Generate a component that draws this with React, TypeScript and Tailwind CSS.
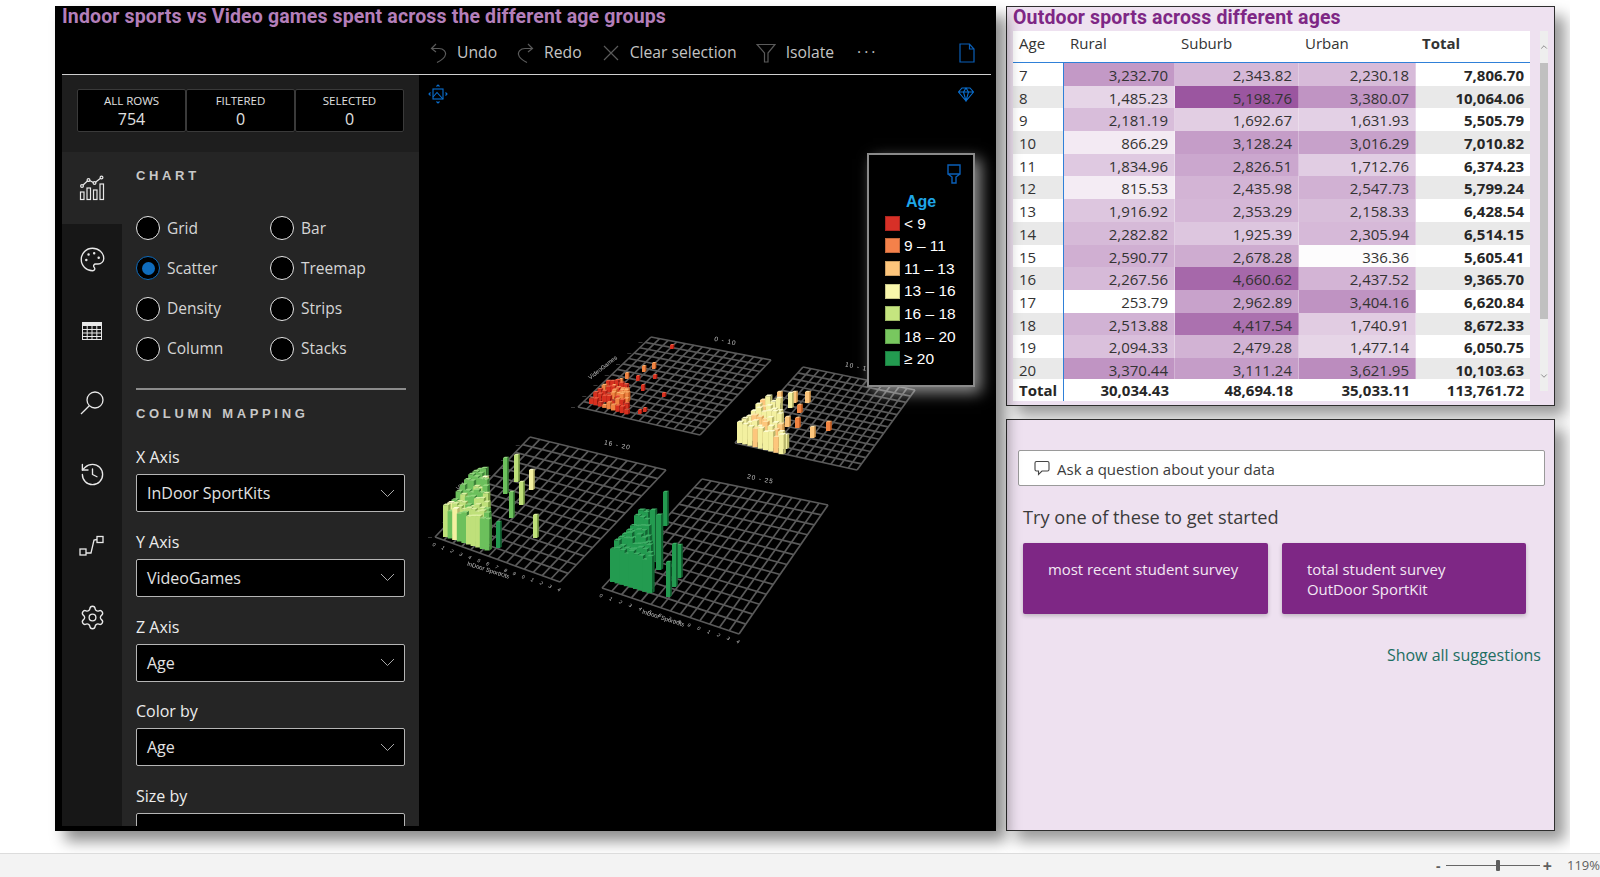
import React from "react";
import { ChevronDown, ChevronUp, History, Palette, Settings } from "lucide-react";

type Pt = [number, number];
type Plate = {
  corners: [Pt, Pt, Pt, Pt];
  title: string;
  titleAt: Pt;
  yLabel?: Pt;
  xLabel?: Pt;
};

const PALETTE: Record<string, [string, string, string]> = {
  red: ["#d7301f", "#ef6548", "#a81c10"],
  orange: ["#f08442", "#fbb36e", "#c45f24"],
  peach: ["#fdc67c", "#fee2a8", "#d59a50"],
  yellow: ["#f3f0a0", "#fdfcd0", "#b9b66c"],
  lime: ["#bfe07a", "#dcf0a2", "#7fa24a"],
  green: ["#6cc05c", "#93d67e", "#3d8238"],
  dark: ["#239b50", "#3fae66", "#126332"],
};

// near-left, back-left, back-right, near-right
const PLATES: Plate[] = [
  { corners: [[578, 407], [651, 337], [771, 360], [700, 435]], title: "0 - 10", titleAt: [725, 343], yLabel: [604, 369] },
  { corners: [[735, 443], [803, 367], [915, 390], [857, 470]], title: "10 - 15", titleAt: [858, 369] },
  { corners: [[435, 537], [530, 437], [666, 470], [560, 582]], title: "16 - 20", titleAt: [617, 447], yLabel: [472, 480], xLabel: [488, 571] },
  { corners: [[602, 588], [702, 479], [828, 505], [739, 634]], title: "20 - 25", titleAt: [760, 481], xLabel: [663, 619] },
];

const lerp = (a: Pt, b: Pt, t: number): Pt => [a[0] + (b[0] - a[0]) * t, a[1] + (b[1] - a[1]) * t];

function rng(seed: number) {
  let s = seed;
  return () => {
    s = (s * 16807) % 2147483647;
    return s / 2147483647;
  };
}

type Bar = { x: number; y: number; h: number; c: string; w: number };

function cluster(seed: number, start: Pt, colV: Pt, rowV: Pt, cols: number, rows: number, minH: number, maxH: number, w: number, colors: string[]) {
  const r = rng(seed);
  const out: Bar[] = [];
  for (let j = rows - 1; j >= 0; j--) {
    for (let i = 0; i < cols - j; i++) {
      const h = minH + (maxH - minH) * r() + j * 0.6;
      out.push({
        x: start[0] + colV[0] * i + rowV[0] * j,
        y: start[1] + colV[1] * i + rowV[1] * j,
        h,
        w,
        c: colors[Math.floor(r() * colors.length)],
      });
    }
  }
  return out;
}

const b = (x: number, yTop: number, yBottom: number, c: string, w = 4): Bar => ({ x, y: yBottom, h: yBottom - yTop, c, w });

const BARS: Bar[] = [
  // plate 1
  b(670, 345, 349, "red", 3), b(642, 366, 372, "orange", 3), b(652, 363, 369, "orange", 3), b(653, 375, 379, "red", 3),
  b(625, 373, 379, "orange", 3), b(636, 376, 381, "red", 3), b(619, 379, 385, "orange", 3), b(641, 385, 391, "red", 3),
  b(662, 393, 397, "red", 3), b(612, 385, 390, "orange", 3), b(620, 391, 395, "red", 3), b(638, 410, 414, "red", 3),
  b(643, 408, 412, "red", 3),
  ...cluster(11, [589, 404], [4.4, 1.3], [4.2, -4.4], 9, 5, 3, 7, 4, ["red", "red", "orange", "red"]),
  ...cluster(12, [612, 397], [4.2, 1.5], [3.6, -4], 4, 2, 5, 9, 4, ["orange", "orange", "red"]),
  // plate 2
  b(777, 392, 403, "peach"), b(788, 393, 408, "yellow"), b(792, 392, 403, "peach"), b(805, 392, 403, "peach"),
  b(797, 405, 413, "orange"), b(772, 413, 423, "peach"), b(785, 417, 427, "peach"), b(795, 418, 428, "orange"),
  b(810, 427, 438, "peach"), b(826, 422, 431, "orange"),
  ...cluster(21, [737, 443], [5.2, 1.4], [4.6, -5], 9, 6, 15, 21, 5, ["yellow", "yellow", "yellow", "peach"]),
  b(772, 438, 448, "orange", 5), b(782, 435, 449, "yellow", 5),
  // plate 3
  b(503, 458, 494, "green"), b(514, 455, 482, "lime"), b(529, 470, 490, "yellow"), b(519, 482, 505, "lime"),
  b(509, 492, 518, "green"), b(533, 515, 538, "lime"), b(496, 522, 548, "dark"),
  ...cluster(31, [443, 537], [4.6, 1.5], [4.2, -4.6], 10, 9, 26, 32, 5.2, ["green", "green", "green", "lime", "green", "lime", "green", "green", "lime", "yellow"]),
  // plate 4
  b(663, 492, 526, "dark"), b(666, 562, 597, "dark"), b(672, 544, 587, "dark"), b(677, 545, 578, "dark"),
  ...cluster(41, [610, 582], [4.6, 1.4], [4, -4.4], 9, 9, 31, 37, 5.4, ["dark"]),
  b(650, 510, 562, "dark", 5), b(656, 515, 570, "dark", 5),
].sort((p, q) => p.y - q.y);

function PlateGrid({ plate }: { plate: Plate }) {
  const [nl, bl, br, nr] = plate.corners;
  const cols = 14;
  const rows = 13;
  const lines: React.ReactNode[] = [];
  for (let i = 0; i <= cols; i++) {
    const p = lerp(nl, nr, i / cols);
    const q = lerp(bl, br, i / cols);
    lines.push(<line key={`c${i}`} x1={p[0]} y1={p[1]} x2={q[0]} y2={q[1]} />);
  }
  for (let j = 0; j <= rows; j++) {
    const p = lerp(nl, bl, j / rows);
    const q = lerp(nr, br, j / rows);
    lines.push(<line key={`r${j}`} x1={p[0]} y1={p[1]} x2={q[0]} y2={q[1]} />);
  }
  const ticks: React.ReactNode[] = [];
  if (plate.xLabel) {
    for (let i = 0; i <= cols; i++) {
      const p = lerp(nl, nr, i / cols);
      ticks.push(
        <text key={`x${i}`} x={p[0] - 3} y={p[1] + 8} fontSize="5" transform={`rotate(40 ${p[0] - 3} ${p[1] + 8})`}>
          {i % 10}
        </text>
      );
    }
  }
  if (plate.yLabel) {
    for (let j = 0; j <= rows; j += 2) {
      const p = lerp(nl, bl, j / rows);
      ticks.push(
        <text key={`y${j}`} x={p[0] - 7} y={p[1] + 1} fontSize="4">
          —
        </text>
      );
    }
  }
  return (
    <g>
      <g stroke="#5a5a5a" strokeWidth="1.7">{lines}</g>
      <g fill="#c4c4c4" fontFamily="Liberation Sans, sans-serif">
        {ticks}
        <text x={plate.titleAt[0]} y={plate.titleAt[1]} fontSize="6.5" letterSpacing="1" textAnchor="middle" transform={`rotate(12 ${plate.titleAt[0]} ${plate.titleAt[1]})`}>
          {plate.title}
        </text>
        {plate.xLabel && (
          <text x={plate.xLabel[0]} y={plate.xLabel[1] + 1} fontSize="6" textAnchor="middle" transform={`rotate(18 ${plate.xLabel[0]} ${plate.xLabel[1]})`}>
            InDoor SportKits
          </text>
        )}
        {plate.yLabel && (
          <text x={plate.yLabel[0]} y={plate.yLabel[1]} fontSize="6" textAnchor="middle" transform={`rotate(-38 ${plate.yLabel[0]} ${plate.yLabel[1]})`}>
            VideoGames
          </text>
        )}
      </g>
    </g>
  );
}

function Bars() {
  return (
    <g>
      {BARS.map((bar, i) => {
        const [base, light, dark] = PALETTE[bar.c];
        const { x, y, h, w } = bar;
        const top = y - h;
        const d = w * 0.45;
        return (
          <g key={i}>
            <rect x={x} y={top} width={w} height={h} fill={base} />
            <polygon points={`${x + w},${top} ${x + w + d},${top - d * 0.7} ${x + w + d},${y - d * 0.7} ${x + w},${y}`} fill={dark} />
            <polygon points={`${x},${top} ${x + d},${top - d * 0.7} ${x + w + d},${top - d * 0.7} ${x + w},${top}`} fill={light} />
          </g>
        );
      })}
    </g>
  );
}

function ScatterScene() {
  return (
    <svg className="absolute top-0 left-0 blur-[0.5px]" width="577" height="751" viewBox="419 75 577 751">
      {PLATES.map((p) => (
        <PlateGrid key={p.title} plate={p} />
      ))}
      <Bars />
    </svg>
  );
}

const Radio = ({ label, on }: { label: string; on?: boolean }) => (
  <div className="flex items-center gap-[7px]">
    <div className={`w-[24px] h-[24px] rounded-full bg-black border-[1.5px] flex items-center justify-center ${on ? "border-[#0f6cbd]" : "border-[#e6e6e6]"}`}>
      {on && <div className="w-[13px] h-[13px] rounded-full bg-[#0f6cbd]" />}
    </div>
    <span className="text-[15.5px] text-[#d6d6d6]">{label}</span>
  </div>
);

const Chevron = () => (
  <svg width="15" height="9" viewBox="0 0 15 9" fill="none" stroke="#a8a8a8" strokeWidth="1">
    <path d="M1 1 L7.5 7.5 L14 1" />
  </svg>
);

const Field = ({ label, value }: { label: string; value: string }) => (
  <div>
    <div className="h-[22px] leading-[22px] text-[16px] font-medium text-[#ececec]">{label}</div>
    <div className="mt-[6px] h-[38px] w-[269px] border-[1.5px] border-[#b5b5b5] rounded-[2px] bg-black flex items-center justify-between pl-[10px] pr-[9px]">
      <span className="text-[16px] text-[#e2e2e2]">{value}</span>
      {value && <Chevron />}
    </div>
  </div>
);

const ChartNavIcon = () => (
  <svg width="26" height="26" viewBox="0 0 26 26" fill="none" stroke="#e8e8e8" strokeWidth="1.2">
    <rect x="1.5" y="17" width="3.5" height="7.5" />
    <rect x="8" y="13" width="3.5" height="11.5" />
    <rect x="14.5" y="15" width="3.5" height="9.5" />
    <rect x="21" y="9" width="3.5" height="15.5" />
    <path d="M3 11 L9.5 5 L15.5 8 L22.5 2.5" />
    <circle cx="3" cy="11" r="1.4" fill="#252525" />
    <circle cx="9.5" cy="5" r="1.4" fill="#252525" />
    <circle cx="15.5" cy="8" r="1.4" fill="#252525" />
    <circle cx="22.5" cy="2.5" r="1.4" fill="#252525" />
  </svg>
);

const TableIcon = () => (
  <svg width="20" height="18" viewBox="0 0 20 18" fill="none" stroke="#e8e8e8" strokeWidth="1">
    <rect x="0.5" y="0.5" width="19" height="17" />
    <rect x="0.5" y="0.5" width="19" height="3" fill="#e8e8e8" />
    <path d="M0.5 7.5 H19.5 M0.5 11 H19.5 M0.5 14.5 H19.5 M5.2 3.5 V17.5 M10 3.5 V17.5 M14.8 3.5 V17.5" />
  </svg>
);

const SearchIcon = () => (
  <svg width="24" height="24" viewBox="0 0 24 24" fill="none" stroke="#e8e8e8" strokeWidth="1.3">
    <circle cx="15" cy="9" r="8" />
    <path d="M9.3 14.7 L1 23" />
  </svg>
);

const FlowIcon = () => (
  <svg width="26" height="22" viewBox="0 0 26 22" fill="none" stroke="#e8e8e8" strokeWidth="1.3">
    <rect x="1" y="14" width="6" height="6" />
    <rect x="18" y="1.5" width="6" height="6" />
    <path d="M7 18 L12 18 L15 5 L18 4.5" />
  </svg>
);

const UndoIcon = ({ flip }: { flip?: boolean }) => (
  <svg width="17" height="20" viewBox="0 0 17 20" fill="none" stroke="#5a5a5a" strokeWidth="1.2" className={flip ? "-scale-x-100" : ""}>
    <path d="M6 1 L1.5 5.5 L6 9" />
    <path d="M1.5 5.5 H9 C 14 5.5, 16 9, 15.5 11.5 C 15 14.5, 11 17.5, 7 19.5" />
  </svg>
);

const FunnelIcon = () => (
  <svg width="20" height="20" viewBox="0 0 20 20" fill="none" stroke="#5a5a5a" strokeWidth="1.2">
    <path d="M1 1.5 H19 L12 10 V19 H8.5 V10 Z" />
  </svg>
);

const CrossIcon = () => (
  <svg width="16" height="16" viewBox="0 0 16 16" stroke="#5a5a5a" strokeWidth="1.2">
    <path d="M1 1 L15 15 M15 1 L1 15" />
  </svg>
);

const DocIcon = () => (
  <svg width="16" height="20" viewBox="0 0 16 20" fill="none" stroke="#0a5fb8" strokeWidth="1.2">
    <path d="M1 1 H10.5 L15 6 V19 H1 Z M10.5 1 V6 H15" />
  </svg>
);

const MoveImageIcon = () => (
  <svg width="20" height="20" viewBox="0 0 20 20" fill="none" stroke="#0a6fd0" strokeWidth="1.1">
    <rect x="5" y="5" width="10" height="10" />
    <path d="M5 13 L9 8.5 L15 15" />
    <path d="M8.5 2.5 L10 1 L11.5 2.5 M8.5 17.5 L10 19 L11.5 17.5 M2.5 8.5 L1 10 L2.5 11.5 M17.5 8.5 L19 10 L17.5 11.5" />
  </svg>
);

const GemIcon = () => (
  <svg width="16" height="15" viewBox="0 0 16 15" fill="none" stroke="#0a6fd0" strokeWidth="1.1">
    <path d="M4 1 H12 L15.5 5 L8 14 L0.5 5 Z M0.5 5 H15.5 M5.5 5 L8 14 L10.5 5 M5.5 5 L8 1 L10.5 5" />
  </svg>
);

const BrushIcon = () => (
  <svg width="14" height="20" viewBox="0 0 14 20" fill="none" stroke="#0a5fb8" strokeWidth="1.4">
    <path d="M1 1 H13 V10 H1 Z M1 10 L5 13 V19 H9 V13 L13 10" />
  </svg>
);

const ChatIcon = () => (
  <svg width="16" height="16" viewBox="0 0 16 16" fill="none" stroke="#444" strokeWidth="1.1">
    <path d="M2.5 1.5 H13.5 Q15 1.5 15 3 V9.5 Q15 11 13.5 11 H8 L4.5 14.5 V11 H2.5 Q1 11 1 9.5 V3 Q1 1.5 2.5 1.5 Z" />
  </svg>
);

const NAV = [
  <ChartNavIcon key="a" />,
  <Palette key="b" size={27} strokeWidth={1.2} className="text-[#e8e8e8]" />,
  <TableIcon key="c" />,
  <SearchIcon key="d" />,
  <History key="e" size={27} strokeWidth={1.2} className="text-[#e8e8e8]" />,
  <FlowIcon key="f" />,
  <Settings key="g" size={27} strokeWidth={1.2} className="text-[#e8e8e8]" />,
];

const LEGEND: [string, string][] = [
  ["< 9", "bg-[#d73027]"],
  ["9 – 11", "bg-[#f4814a]"],
  ["11 – 13", "bg-[#fdc57b]"],
  ["13 – 16", "bg-[#f9f7ab]"],
  ["16 – 18", "bg-[#c5e57f]"],
  ["18 – 20", "bg-[#78c75f]"],
  ["≥ 20", "bg-[#239b50]"],
];

const ROWS: [string, number, number, number, string][] = [
  ["7", 3232.7, 2343.82, 2230.18, "7,806.70"],
  ["8", 1485.23, 5198.76, 3380.07, "10,064.06"],
  ["9", 2181.19, 1692.67, 1631.93, "5,505.79"],
  ["10", 866.29, 3128.24, 3016.29, "7,010.82"],
  ["11", 1834.96, 2826.51, 1712.76, "6,374.23"],
  ["12", 815.53, 2435.98, 2547.73, "5,799.24"],
  ["13", 1916.92, 2353.29, 2158.33, "6,428.54"],
  ["14", 2282.82, 1925.39, 2305.94, "6,514.15"],
  ["15", 2590.77, 2678.28, 336.36, "5,605.41"],
  ["16", 2267.56, 4660.62, 2437.52, "9,365.70"],
  ["17", 253.79, 2962.89, 3404.16, "6,620.84"],
  ["18", 2513.88, 4417.54, 1740.91, "8,672.33"],
  ["19", 2094.33, 2479.28, 1477.14, "6,050.75"],
  ["20", 3370.44, 3111.24, 3621.95, "10,103.63"],
];

const fmt = (v: number) => v.toLocaleString("en-US", { minimumFractionDigits: 2, maximumFractionDigits: 2 });

function heat(v: number) {
  const t = Math.max(0, (v - 253.79) / (5198.76 - 253.79));
  const mix = (from: number, to: number) => Math.round(from + (to - from) * t);
  return `rgb(${mix(255, 155)},${mix(255, 86)},${mix(255, 160)})`;
}

const GRID = "grid grid-cols-[51px_111px_124px_117px_115px]";

function Matrix() {
  return (
    <div className="flex pl-[6px]">
      <div className="w-[517px] bg-white text-[15px] text-[#333]">
        <div className={`${GRID} h-[32px] border-b border-[#2f80d8]`}>
          <div className="pl-[6px] pt-[1px]">Age</div>
          <div className="pl-[6px] pt-[1px]">Rural</div>
          <div className="pl-[6px] pt-[1px]">Suburb</div>
          <div className="pl-[6px] pt-[1px]">Urban</div>
          <div className="pl-[6px] pt-[1px] font-bold">Total</div>
        </div>
        <div className="h-[316px] overflow-hidden">
          {ROWS.map((r, i) => (
            <div key={r[0]} className={`${GRID} h-[22.7px] leading-[24px] ${i % 2 ? "bg-[#e9e9e9]" : "bg-white"}`}>
              <div className="pl-[6px] border-r border-[#2f80d8]">{r[0]}</div>
              {[r[1], r[2], r[3]].map((v, k) => (
                <div key={k} className="text-right pr-[6px] border-r border-white/30" style={{ backgroundColor: heat(v) }}>
                  {fmt(v)}
                </div>
              ))}
              <div className="text-right pr-[7px] font-bold text-[#262626]">{r[4]}</div>
            </div>
          ))}
        </div>
        <div className={`${GRID} h-[22px] leading-[22px] font-bold text-[#262626]`}>
          <div className="pl-[6px] border-r border-[#2f80d8]">Total</div>
          <div className="text-right pr-[6px]">30,034.43</div>
          <div className="text-right pr-[6px]">48,694.18</div>
          <div className="text-right pr-[6px]">35,033.11</div>
          <div className="text-right pr-[7px]">113,761.72</div>
        </div>
      </div>
      <div className="ml-[10px] w-[8px] h-[360px] bg-[#ebe6ec] flex flex-col items-center">
        <div className="h-[32px] w-full bg-[#eeeeee] flex items-center justify-center">
          <ChevronUp size={10} strokeWidth={1.5} className="text-[#555] shrink-0" />
        </div>
        <div className="h-[256px] w-full bg-[#c0c0c0]" />
        <div className="flex-1 w-full bg-[#eeeeee] flex items-end justify-center pb-[10px]">
          <ChevronDown size={10} strokeWidth={1.5} className="text-[#555] shrink-0" />
        </div>
      </div>
    </div>
  );
}

export default function App() {
  return (
    <div className="w-[1600px] h-[877px] bg-white overflow-hidden flex flex-col font-['Open_Sans',sans-serif]">
      <div className="h-[853px] w-[1570px] overflow-hidden flex pt-[6px] pl-[55px]">
        {/* left visual */}
        <div className="w-[941px] h-[825px] bg-black shadow-[10px_10px_14px_rgba(0,0,0,0.45)] shrink-0 relative z-0">
          <div className="h-[22px] pl-[7px] font-['Roboto',sans-serif] font-bold text-[19.5px] tracking-[0.14px] leading-[22px] text-[#b47fba]">
            Indoor sports vs Video games spent across the different age groups
          </div>
          <div className="h-[46px] pt-[4px] flex items-center pl-[375px] text-[15.7px] text-[#c4c4c4]">
            <UndoIcon />
            <span className="ml-[10px]">Undo</span>
            <span className="ml-[20px]"><UndoIcon flip /></span>
            <span className="ml-[10px]">Redo</span>
            <span className="ml-[21px]"><CrossIcon /></span>
            <span className="ml-[11px]">Clear selection</span>
            <span className="ml-[19px]"><FunnelIcon /></span>
            <span className="ml-[10px]">Isolate</span>
            <span className="ml-[23px] tracking-[3px] text-[#bbb]">···</span>
            <span className="ml-[81px]"><DocIcon /></span>
          </div>
          <div className="h-px ml-[7px] w-[929px] bg-[#cfcfcf]" />
          <div className="flex h-[751px] ml-[7px]">
            <div className="w-[357px] flex flex-col overflow-hidden">
              <div className="h-[77px] bg-[#1e1e1e] pl-[15px] pt-[14px] flex">
                {[["ALL ROWS", "754"], ["FILTERED", "0"], ["SELECTED", "0"]].map(([k, v]) => (
                  <div key={k} className="w-[109px] h-[43px] bg-black border border-[#3a3a3a] rounded-[2px] flex flex-col items-center text-[#e0e0e0]">
                    <span className="text-[11.5px] leading-[16px] mt-[3px]">{k}</span>
                    <span className="text-[16px] leading-[20px]">{v}</span>
                  </div>
                ))}
              </div>
              <div className="flex flex-1 min-h-0">
                <div className="w-[60px] bg-[#171717] flex flex-col">
                  {NAV.map((icon, i) => (
                    <div key={i} className={`h-[71.6px] flex items-center justify-center ${i === 0 ? "bg-[#252525]" : ""}`}>
                      {icon}
                    </div>
                  ))}
                </div>
                <div className="flex-1 bg-[#252525] pl-[14px] overflow-hidden">
                  <div className="mt-[16px] h-[16px] leading-[16px] font-['Liberation_Sans',sans-serif] font-bold text-[13px] tracking-[3.65px] text-[#c8c8c8]">CHART</div>
                  <div className="mt-[24px] grid grid-cols-[134px_1fr] auto-rows-[40.3px] items-center">
                    <Radio label="Grid" />
                    <Radio label="Bar" />
                    <Radio label="Scatter" on />
                    <Radio label="Treemap" />
                    <Radio label="Density" />
                    <Radio label="Strips" />
                    <Radio label="Column" />
                    <Radio label="Stacks" />
                  </div>
                  <div className="mt-[19px] h-[1.5px] w-[270px] bg-[#8c8c8c]" />
                  <div className="mt-[16px] h-[16px] leading-[16px] font-['Liberation_Sans',sans-serif] font-bold text-[13px] tracking-[3.65px] text-[#c8c8c8]">COLUMN MAPPING</div>
                  <div className="mt-[24.5px] flex flex-col gap-[18.7px]">
                    <Field label="X Axis" value="InDoor SportKits" />
                    <Field label="Y Axis" value="VideoGames" />
                    <Field label="Z Axis" value="Age" />
                    <Field label="Color by" value="Age" />
                    <Field label="Size by" value="" />
                  </div>
                </div>
              </div>
            </div>
            <div className="flex-1 relative bg-black">
              <ScatterScene />
              <div className="absolute left-[9px] top-[9px]"><MoveImageIcon /></div>
              <div className="absolute left-[539px] top-[12px]"><GemIcon /></div>
              <div className="absolute left-[448px] top-[78px] w-[108px] h-[234px] bg-black border-2 border-[#8a8a8a] shadow-[6px_6px_14px_rgba(255,255,255,0.55)] font-['Liberation_Sans',sans-serif]">
                <div className="flex justify-end pr-[12px] pt-[9px]"><BrushIcon /></div>
                <div className="text-center font-bold text-[16px] leading-[20px] mt-[8px] text-[#1fa6e8]">Age</div>
                <div className="pl-[16px]">
                  {LEGEND.map(([t, c]) => (
                    <div key={t} className="h-[22.6px] flex items-center gap-[4px] text-[15.5px] text-white">
                      <div className={`w-[15px] h-[15px] border border-black/20 ${c}`} />
                      <span>{t}</span>
                    </div>
                  ))}
                </div>
              </div>
            </div>
          </div>
        </div>
        {/* right column */}
        <div className="ml-[10px] w-[549px] h-[825px] shrink-0 flex flex-col gap-[13px]">
          <div className="h-[400px] bg-[#eee1f0] border-[1.5px] border-[#2e2e2e] shadow-[10px_10px_14px_rgba(0,0,0,0.4)]">
            <div className="h-[24px] pl-[6px] font-['Roboto',sans-serif] font-bold text-[19.5px] tracking-[0.14px] leading-[22px] text-[#7e2785]">
              Outdoor sports across different ages
            </div>
            <Matrix />
          </div>
          <div className="h-[412px] bg-[#eee1f0] border-[1.5px] border-[#2e2e2e] shadow-[10px_10px_14px_rgba(0,0,0,0.4)] px-[11px] pt-[30px]">
            <div className="h-[36px] w-[527px] bg-white border border-[#9a9a9a] rounded-[2px] flex items-center gap-[7px] pl-[15px] text-[15px] text-[#3b3b3b]">
              <ChatIcon />
              <span className="pt-[3px]">Ask a question about your data</span>
            </div>
            <div className="mt-[17px] pl-[5px] text-[18.2px] leading-[28px] text-[#3b3b3b]">Try one of these to get started</div>
            <div className="mt-[12px] pl-[5px] flex gap-[14px]">
              <div className="w-[245px] h-[71px] bg-[#7e2785] rounded-[2px] shadow-[0_2px_4px_rgba(0,0,0,0.2)] pl-[25px] pt-[16px] text-[14.9px] leading-[20px] text-[#f3e9f4]">
                most recent student survey
              </div>
              <div className="w-[244px] h-[71px] bg-[#7e2785] rounded-[2px] shadow-[0_2px_4px_rgba(0,0,0,0.2)] pl-[25px] pt-[16px] text-[14.9px] leading-[20px] text-[#f3e9f4]">
                total student survey
                <br />
                OutDoor SportKit
              </div>
            </div>
            <div className="mt-[29px] w-[523px] text-right text-[16px] text-[#1d6e62]">Show all suggestions</div>
          </div>
        </div>
      </div>
      {/* status bar */}
      <div className="h-[24px] bg-[#f3f3f3] border-t border-[#dcdcdc] flex items-center pl-[1436px] text-[#5f5f5f] overflow-hidden whitespace-nowrap">
        <span className="w-[11px] font-bold text-[14px] leading-none">-</span>
        <div className="w-[100px] h-px bg-[#666] relative">
          <div className="absolute left-[50px] top-[-5px] w-[4px] h-[11px] rounded-[1px] bg-[#5f5f5f]" />
        </div>
        <span className="ml-[3px] font-bold text-[16px] leading-none">+</span>
        <span className="ml-[15px] text-[13px]">119%</span>
      </div>
    </div>
  );
}
